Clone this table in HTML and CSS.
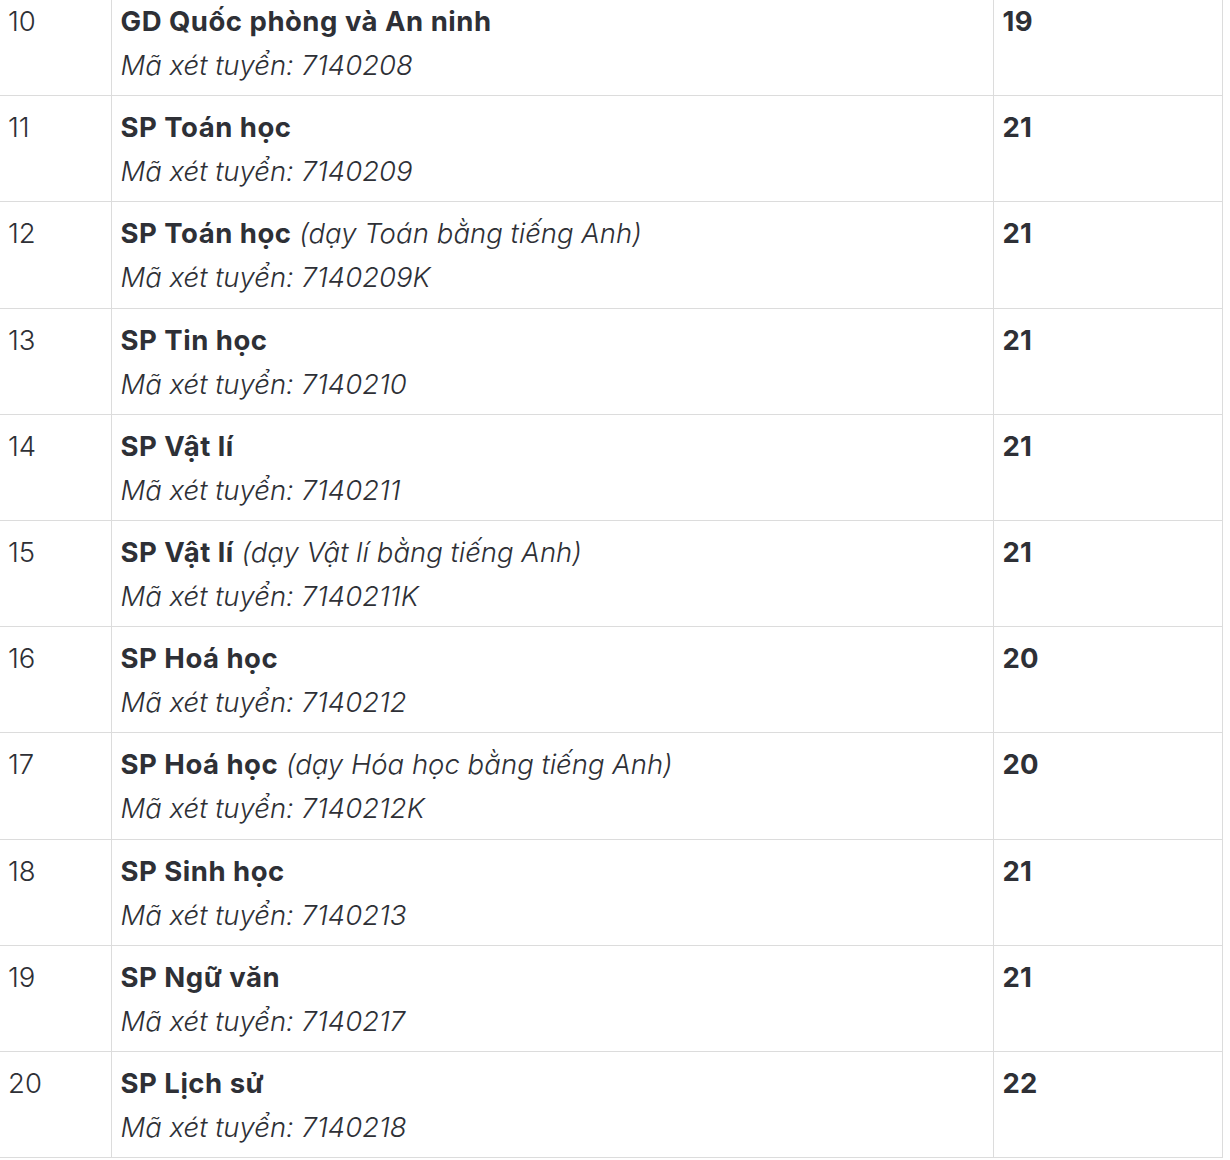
FILE: index.html
```html
<!DOCTYPE html>
<html lang="vi">
<head>
<meta charset="utf-8">
<title>Điểm chuẩn</title>
<link rel="stylesheet" href="styles.css">
</head>
<body>
<table class="scores">
  <tbody>
    <tr><td class="num">10</td><td class="major"><strong>GD Quốc phòng và An ninh</strong><em class="code">Mã xét tuyển: 7140208</em></td><td class="score">19</td></tr>
    <tr><td class="num">11</td><td class="major"><strong>SP Toán học</strong><em class="code">Mã xét tuyển: 7140209</em></td><td class="score">21</td></tr>
    <tr><td class="num">12</td><td class="major"><strong>SP Toán học</strong> <em>(dạy Toán bằng tiếng Anh)</em><em class="code">Mã xét tuyển: 7140209K</em></td><td class="score">21</td></tr>
    <tr><td class="num">13</td><td class="major"><strong>SP Tin học</strong><em class="code">Mã xét tuyển: 7140210</em></td><td class="score">21</td></tr>
    <tr><td class="num">14</td><td class="major"><strong>SP Vật lí</strong><em class="code">Mã xét tuyển: 7140211</em></td><td class="score">21</td></tr>
    <tr><td class="num">15</td><td class="major"><strong>SP Vật lí</strong> <em>(dạy Vật lí bằng tiếng Anh)</em><em class="code">Mã xét tuyển: 7140211K</em></td><td class="score">21</td></tr>
    <tr><td class="num">16</td><td class="major"><strong>SP Hoá học</strong><em class="code">Mã xét tuyển: 7140212</em></td><td class="score">20</td></tr>
    <tr><td class="num">17</td><td class="major"><strong>SP Hoá học</strong> <em>(dạy Hóa học bằng tiếng Anh)</em><em class="code">Mã xét tuyển: 7140212K</em></td><td class="score">20</td></tr>
    <tr><td class="num">18</td><td class="major"><strong>SP Sinh học</strong><em class="code">Mã xét tuyển: 7140213</em></td><td class="score">21</td></tr>
    <tr><td class="num">19</td><td class="major"><strong>SP Ngữ văn</strong><em class="code">Mã xét tuyển: 7140217</em></td><td class="score">21</td></tr>
    <tr><td class="num">20</td><td class="major"><strong>SP Lịch sử</strong><em class="code">Mã xét tuyển: 7140218</em></td><td class="score">22</td></tr>
  </tbody>
</table>
</body>
</html>
```

FILE: styles.css
```css
html, body {
  margin: 0;
  padding: 0;
  background: #ffffff;
}

body {
  font-family: Inter, "Open Sans", sans-serif;
  color: #2e3036;
}

.scores {
  border-collapse: collapse;
  width: 1223px;
  margin-top: -11px;
  table-layout: fixed;
}

.scores td {
  box-sizing: border-box;
  border: 1px solid #dcdcdc;
  vertical-align: top;
  padding: 9px 9px 8px 9px;
  font-size: 27.5px;
  line-height: 44.1px;
}

.scores td.num {
  width: 111px;
  border-left: none;
  padding-left: 8px;
  font-weight: 300;
}

.scores td.major {
  width: 882px;
}

.scores td.score {
  font-weight: 700;
  letter-spacing: 0.3px;
}

.major strong {
  font-weight: 700;
  letter-spacing: 0.5px;
}

.major em {
  font-style: italic;
  font-weight: 300;
}

.major .code {
  display: block;
}
```
